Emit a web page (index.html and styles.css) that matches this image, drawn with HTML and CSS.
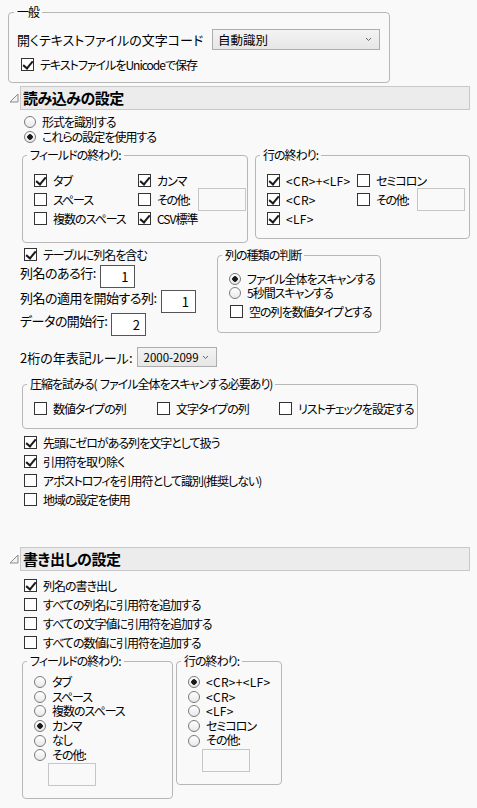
FILE: index.html
```html
<!DOCTYPE html>
<html lang="ja">

<head>
  <meta charset="UTF-8" />
  <meta name="viewport" content="width=device-width, initial-scale=1.0" />
  <title>テキストファイルの設定</title>
  <link rel="stylesheet" href="styles.css">
</head>

<body>
  <div class="page">
    <!-- 一般 -->
    <fieldset class="group general">
      <legend>一般</legend>
      <div class="enc-row">
        <span class="enc-label">開くテキストファイルの文字コード</span>
        <div class="select select-enc">
          <span>自動識別</span>
          <svg class="caret" width="7" height="5" viewBox="0 0 7 5"><polyline points="1,1 3.5,3.5 6,1" fill="none" stroke="#666" stroke-width="1"/></svg>
        </div>
      </div>
      <div class="chk unicode"><span class="box on"></span>テキストファイルをUnicodeで保存</div>
    </fieldset>

    <!-- 読み込みの設定 -->
    <div class="section-head">
      <svg class="tri" width="10" height="10" viewBox="0 0 10 10"><polygon points="9,1 9,9 1,9" fill="#f2f2f2" stroke="#8c8c8c" stroke-width="1"/></svg>
      <h2 class="bar">読み込みの設定</h2>
    </div>

    <div class="intro">
      <div class="rad"><span class="dot"></span>形式を識別する</div>
      <div class="rad"><span class="dot on"></span>これらの設定を使用する</div>
    </div>

    <div class="pair read-ends">
      <fieldset class="group field-end">
        <legend>フィールドの終わり:</legend>
        <div class="opts">
          <div class="chk"><span class="box on"></span>タブ</div>
          <div class="chk"><span class="box on"></span>カンマ</div>
          <div class="chk"><span class="box"></span>スペース</div>
          <div class="chk"><span class="box"></span><span class="other">その他:</span><span class="txt"></span></div>
          <div class="chk"><span class="box"></span>複数のスペース</div>
          <div class="chk"><span class="box on"></span>CSV標準</div>
        </div>
      </fieldset>
      <fieldset class="group line-end">
        <legend>行の終わり:</legend>
        <div class="opts">
          <div class="chk latin"><span class="box on"></span>&lt;CR&gt;+&lt;LF&gt;</div>
          <div class="chk"><span class="box"></span>セミコロン</div>
          <div class="chk latin"><span class="box on"></span>&lt;CR&gt;</div>
          <div class="chk"><span class="box"></span><span class="other">その他:</span><span class="txt"></span></div>
          <div class="chk latin"><span class="box on"></span>&lt;LF&gt;</div>
        </div>
      </fieldset>
    </div>

    <div class="pair names">
      <div class="name-block">
        <div class="chk header-chk"><span class="box on"></span>テーブルに列名を含む</div>
        <div class="num-row r1"><span class="num-label">列名のある行:</span><span class="num">1</span></div>
        <div class="num-row r2"><span class="num-label">列名の適用を開始する列:</span><span class="num">1</span></div>
        <div class="num-row r3"><span class="num-label">データの開始行:</span><span class="num">2</span></div>
      </div>
      <fieldset class="group col-type">
        <legend>列の種類の判断</legend>
        <div class="stack">
          <div class="rad"><span class="dot on"></span>ファイル全体をスキャンする</div>
          <div class="rad"><span class="dot"></span>5秒間スキャンする</div>
          <div class="chk"><span class="box"></span>空の列を数値タイプとする</div>
        </div>
      </fieldset>
    </div>

    <div class="year-row">
      <span class="year-label">2桁の年表記ルール:</span>
      <div class="select select-year">
        <span>2000-2099</span>
        <svg class="caret" width="7" height="5" viewBox="0 0 7 5"><polyline points="1,1 3.5,3.5 6,1" fill="none" stroke="#666" stroke-width="1"/></svg>
      </div>
    </div>

    <fieldset class="group compress">
      <legend>圧縮を試みる(&nbsp;&nbsp;ファイル全体をスキャンする必要あり)</legend>
      <div class="opts">
        <div class="chk"><span class="box"></span>数値タイプの列</div>
        <div class="chk"><span class="box"></span>文字タイプの列</div>
        <div class="chk"><span class="box"></span>リストチェックを設定する</div>
      </div>
    </fieldset>

    <div class="checks">
      <div class="chk"><span class="box on"></span>先頭にゼロがある列を文字として扱う</div>
      <div class="chk"><span class="box on"></span>引用符を取り除く</div>
      <div class="chk"><span class="box"></span>アポストロフィを引用符として識別(推奨しない)</div>
      <div class="chk"><span class="box"></span>地域の設定を使用</div>
    </div>

    <!-- 書き出しの設定 -->
    <div class="section-head export">
      <svg class="tri" width="10" height="10" viewBox="0 0 10 10"><polygon points="9,1 9,9 1,9" fill="#f2f2f2" stroke="#8c8c8c" stroke-width="1"/></svg>
      <h2 class="bar">書き出しの設定</h2>
    </div>

    <div class="checks export-checks">
      <div class="chk"><span class="box on"></span>列名の書き出し</div>
      <div class="chk"><span class="box"></span>すべての列名に引用符を追加する</div>
      <div class="chk"><span class="box"></span>すべての文字値に引用符を追加する</div>
      <div class="chk"><span class="box"></span>すべての数値に引用符を追加する</div>
    </div>

    <div class="pair export-ends">
      <fieldset class="group field-end2">
        <legend>フィールドの終わり:</legend>
        <div class="stack">
          <div class="rad"><span class="dot"></span>タブ</div>
          <div class="rad"><span class="dot"></span>スペース</div>
          <div class="rad"><span class="dot"></span>複数のスペース</div>
          <div class="rad"><span class="dot on"></span>カンマ</div>
          <div class="rad"><span class="dot"></span>なし</div>
          <div class="rad"><span class="dot"></span>その他:</div>
          <span class="txt"></span>
        </div>
      </fieldset>
      <fieldset class="group line-end2">
        <legend>行の終わり:</legend>
        <div class="stack">
          <div class="rad latin"><span class="dot on"></span>&lt;CR&gt;+&lt;LF&gt;</div>
          <div class="rad latin"><span class="dot"></span>&lt;CR&gt;</div>
          <div class="rad latin"><span class="dot"></span>&lt;LF&gt;</div>
          <div class="rad"><span class="dot"></span>セミコロン</div>
          <div class="rad"><span class="dot"></span>その他:</div>
          <span class="txt"></span>
        </div>
      </fieldset>
    </div>
  </div>
</body>

</html>
```

FILE: styles.css
```css
* {
  box-sizing: border-box;
}

body {
  margin: 0;
  background: #f9f9f9;
  color: #000;
  font-family: "Noto Sans CJK JP", "Noto Sans", sans-serif;
  font-size: 12px;
  letter-spacing: -1px;
  font-feature-settings: "palt";
}

.page {
  width: 477px;
  height: 808px;
  overflow: hidden;
  padding-top: 5px;
}

/* 枠 */
.group {
  margin: 0;
  padding: 0 0 0 4px;
  border: 1px solid #b7b7b7;
  border-radius: 4px;
  min-width: 0;
}

.group legend {
  padding: 0 3px;
  height: 14px;
  line-height: 14px;
  white-space: nowrap;
}

/* 部品 */
.chk {
  display: flex;
  align-items: center;
  gap: 6px;
  height: 19px;
  line-height: 15px;
  white-space: nowrap;
}

.latin {
  letter-spacing: 0.3px;
}

.other {
  letter-spacing: -1.3px;
  padding-right: 2px;
}

.box {
  position: relative;
  flex: none;
  width: 13px;
  height: 13px;
  border: 1px solid #333;
  background: #fff;
}

.box.on::after {
  content: "";
  position: absolute;
  left: 3px;
  top: 0;
  width: 4px;
  height: 8px;
  border: solid #1a1a1a;
  border-width: 0 2px 2px 0;
  transform: rotate(40deg);
}

.rad {
  display: flex;
  align-items: center;
  gap: 6px;
  height: 15px;
  line-height: 15px;
  white-space: nowrap;
}

.dot {
  flex: none;
  width: 12px;
  height: 12px;
  border: 1px solid #7a7a7a;
  border-radius: 50%;
  background: linear-gradient(#fff, #e8e8e8);
}

.dot.on {
  background: radial-gradient(circle, #1a1a1a 0 2.5px, transparent 3px), linear-gradient(#fff, #e8e8e8);
}

.select {
  display: flex;
  align-items: center;
  justify-content: space-between;
  border: 1px solid #adadad;
  background: linear-gradient(#f3f3f3, #e6e6e6);
  padding: 0 7px 0 5px;
  white-space: nowrap;
}

.txt {
  display: block;
  flex: none;
  width: 48px;
  height: 23px;
  border: 1px solid #c6c6c6;
  background: #f9f9f9;
}

.opts {
  display: grid;
  grid-auto-rows: 19px;
  align-items: center;
  padding-left: 7px;
}

.stack {
  padding-left: 7px;
}

.pair {
  display: flex;
  align-items: flex-start;
}

/* 一般 */
.general {
  margin-left: 8px;
  width: 382px;
  padding: 10px 0 8px 5px;
}

.enc-row {
  display: flex;
  align-items: center;
  height: 21px;
  padding-left: 3px;
  font-size: 13px;
  letter-spacing: 0;
}

.enc-label {
  width: 195px;
  white-space: nowrap;
}

.select-enc {
  width: 168px;
  height: 21px;
  font-size: 12.5px;
}

.unicode {
  margin: 5px 0 0 7px;
}

/* 見出し */
.section-head {
  display: flex;
  align-items: center;
  margin-top: 3px;
}

.section-head.export {
  margin-top: 38px;
}

.tri {
  margin-left: 9px;
  margin-right: 1px;
}

.bar {
  margin: 0;
  width: 450px;
  height: 24px;
  border: 1px solid #c8c8c8;
  background: #ececec;
  font-size: 15px;
  font-weight: bold;
  letter-spacing: -0.5px;
  line-height: 22px;
  padding-left: 2px;
}

/* 読み込み */
.intro {
  margin-top: 4px;
  padding-left: 24px;
}

.read-ends {
  margin-top: 4px;
  padding-left: 22px;
  gap: 7px;
}

.field-end {
  width: 226px;
  padding-top: 9px;
  padding-bottom: 14px;
}

.field-end .opts {
  grid-template-columns: 104px auto;
}

.line-end {
  width: 215px;
  padding-top: 9px;
  padding-bottom: 10px;
}

.line-end .opts {
  grid-template-columns: 90px auto;
}

.names {
  margin-top: 4px;
}

.name-block {
  width: 217px;
  padding-left: 20px;
}

.header-chk {
  height: 15px;
  margin-left: 4px;
}

.num-row {
  display: flex;
  align-items: flex-start;
  gap: 4px;
  font-size: 13px;
  letter-spacing: -0.5px;
  line-height: 15px;
  white-space: nowrap;
}

.num {
  width: 35px;
  height: 23px;
  border: 1px solid #555;
  background: #fff;
  text-align: right;
  padding-right: 6px;
  line-height: 21px;
}

.r1 { margin-top: 3px; }
.r2 { margin-top: 2px; }

.col-type {
  width: 164px;
  margin-top: 1px;
  padding-top: 10px;
  padding-bottom: 12px;
}

.col-type .rad {
  height: 14px;
  line-height: 14px;
}

.col-type .chk {
  height: 18px;
  margin: 2px 0 0 1px;
}

.year-row {
  display: flex;
  align-items: center;
  gap: 4px;
  margin-top: 11px;
  padding-left: 20px;
  height: 20px;
  font-size: 13px;
  letter-spacing: 0;
  white-space: nowrap;
}

.select-year {
  width: 80px;
  height: 20px;
  padding-left: 6px;
  font-size: 11.5px;
}

.compress {
  margin: 10px 0 0 22px;
  width: 396px;
  padding-top: 8px;
  padding-bottom: 10px;
}

.compress .opts {
  grid-template-columns: 123px 122px auto;
}

.checks {
  margin-top: 4px;
  padding-left: 24px;
}

.export-checks {
  margin-top: 5px;
}

/* 書き出し */
.export-ends {
  margin-top: 2px;
  padding-left: 22px;
  gap: 3px;
}

.field-end2 {
  width: 151px;
  padding-top: 7px;
  padding-bottom: 12px;
}

.line-end2 {
  width: 106px;
  padding-top: 7px;
  padding-bottom: 12px;
}

.export-ends .rad {
  height: 14.6px;
  line-height: 14.6px;
}

.export-ends .txt {
  margin-left: 14px;
}

.line-end2 .txt {
  margin-top: 1px;
}
```
